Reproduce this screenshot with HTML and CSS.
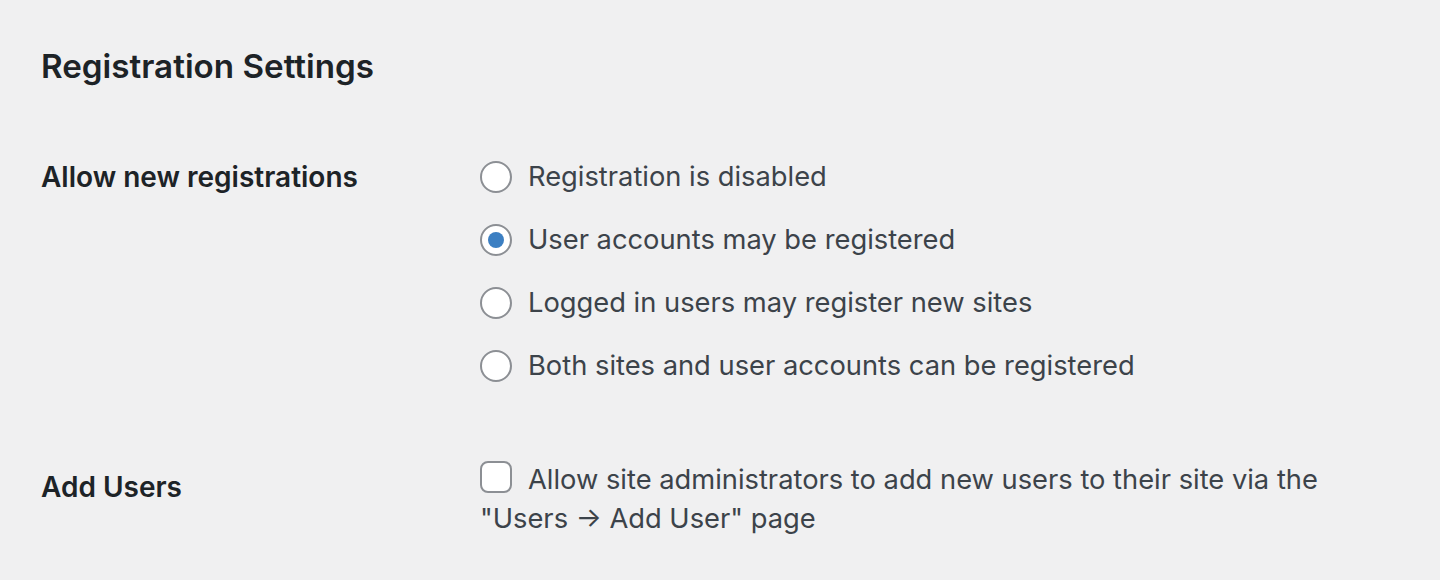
FILE: index.html
```html
<!DOCTYPE html>
<html lang="en">
<head>
    <meta charset="UTF-8">
    <meta name="viewport" content="width=device-width, initial-scale=1.0">
    <title>Registration Settings</title>
    <link rel="stylesheet" href="styles.css">
</head>
<body>
    <h2 class="section-title">Registration Settings</h2>

    <div class="form-table">
        <div class="form-row">
            <div class="row-label">Allow new registrations</div>
            <fieldset class="row-field radio-list">
                <label class="choice"><span class="radio"></span>Registration is disabled</label>
                <label class="choice"><span class="radio checked"></span>User accounts may be registered</label>
                <label class="choice"><span class="radio"></span>Logged in users may register new sites</label>
                <label class="choice"><span class="radio"></span>Both sites and user accounts can be registered</label>
            </fieldset>
        </div>

        <div class="form-row add-users">
            <div class="row-label">Add Users</div>
            <div class="row-field">
                <p class="check-text"><span class="checkbox"></span>Allow site administrators to add new users to their site via the<br>"Users &rarr; Add User" page</p>
            </div>
        </div>
    </div>
</body>
</html>
```

FILE: styles.css
```css
body {
    margin: 0;
    padding: 0 41px;
    background: #f0f0f1;
    color: #3c434a;
    font-family: Inter, "Noto Sans", sans-serif;
}

.section-title {
    margin: 0;
    padding-top: 44px;
    font-size: 33.2px;
    font-weight: 600;
    line-height: 44px;
    color: #1d2327;
}

.form-table {
    margin-top: 71px;
}

.form-row {
    display: grid;
    grid-template-columns: 439px 1fr;
}

.row-label {
    font-size: 28px;
    font-weight: 600;
    line-height: 36px;
    color: #1d2327;
}

.row-field {
    margin: 0;
    padding: 0;
    border: none;
}

.radio-list {
    display: flex;
    flex-direction: column;
}

.choice {
    display: flex;
    align-items: center;
    height: 63px;
    font-size: 27.3px;
    margin-top: -14px;
}

.choice + .choice {
    margin-top: 0;
}

.radio,
.checkbox {
    display: inline-block;
    flex: none;
    width: 28px;
    height: 28px;
    border: 2px solid #8c8f94;
    background: #fff;
    box-sizing: content-box;
    margin-right: 16px;
    position: relative;
}

.radio {
    border-radius: 50%;
}

.radio.checked::before {
    content: "";
    position: absolute;
    top: 6px;
    left: 6px;
    width: 16px;
    height: 16px;
    border-radius: 50%;
    background: #3c7fc2;
}

.add-users {
    margin-top: 61px;
}

.add-users .row-label {
    padding-top: 11px;
}

.check-text {
    margin: 0;
    padding-top: 2px;
    font-size: 27.3px;
    line-height: 39px;
}

.checkbox {
    border-radius: 8px;
    vertical-align: -4px;
}
```
